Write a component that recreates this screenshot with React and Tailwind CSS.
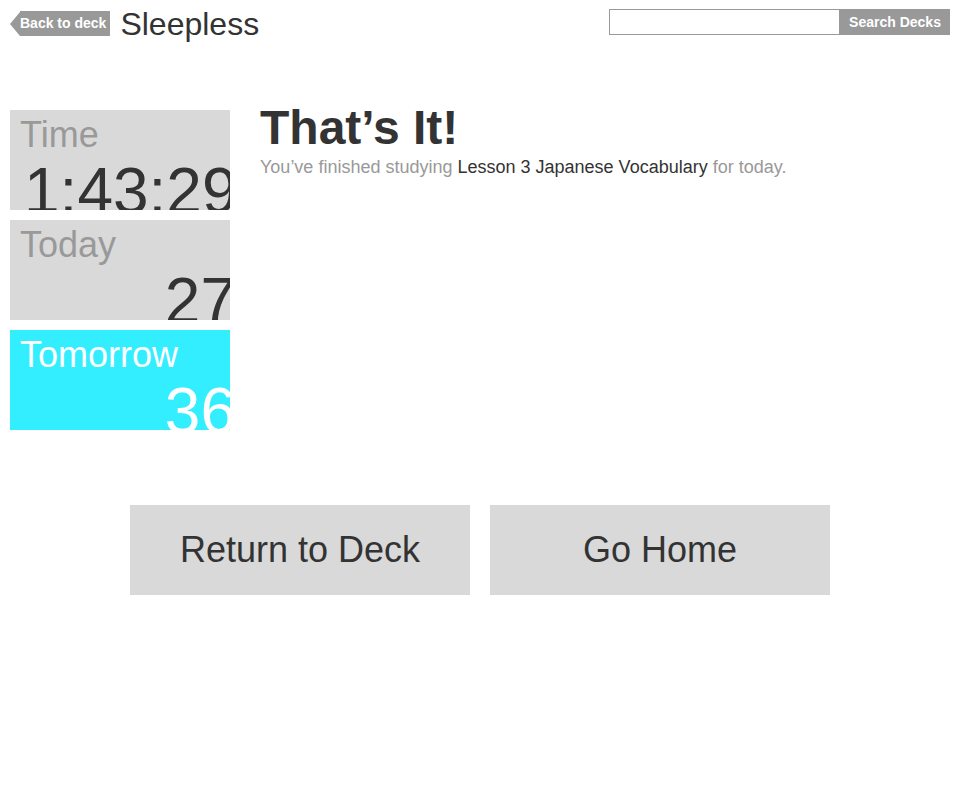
import React from 'react';

const stats = [
  { label: 'Time', value: '1:43:29', active: false },
  { label: 'Today', value: '27', active: false },
  { label: 'Tomorrow', value: '36', active: true },
];

function StatBox({ label, value, active }) {
  return (
    <div
      className={`h-[100px] w-[220px] overflow-hidden pl-[10px] pt-[5px] ${
        active ? 'bg-[#33eeff]' : 'bg-[#d9d9d9]'
      }`}
    >
      <div className={`text-[36px] leading-[40px] ${active ? 'text-white' : 'text-[#999999]'}`}>
        {label}
      </div>
      <div
        className={`-mr-[6px] mt-[4px] whitespace-nowrap pl-[4px] text-right text-[64px] leading-[64px] ${
          active ? 'text-white' : 'text-[#333333]'
        }`}
      >
        {value}
      </div>
    </div>
  );
}

export default function App() {
  return (
    <div className="min-h-[800px] w-[960px] bg-white font-['Liberation_Sans',Arial,sans-serif]">
      <header className="flex items-start justify-between px-[10px] pt-[9px]">
        <div className="flex items-center gap-[10px]">
          <button className="-mt-[1px] flex h-[25px] items-center">
            <span className="h-0 w-0 border-y-[12.5px] border-r-[10px] border-y-transparent border-r-[#999999]"></span>
            <span className="flex h-[25px] items-center bg-[#999999] pr-[4px] text-[14px] font-bold text-white">
              Back to deck
            </span>
          </button>
          <h1 className="text-[32px] leading-[30px] text-[#333333]">Sleepless</h1>
        </div>
        <div className="flex h-[26px]">
          <input
            type="text"
            className="h-[26px] w-[231px] border border-[#999999] bg-white px-1 text-[14px] outline-none"
          />
          <button className="h-[26px] w-[110px] bg-[#999999] text-[14px] font-bold text-white">
            Search Decks
          </button>
        </div>
      </header>

      <main className="mt-[61px] flex">
        <aside className="ml-[10px] mt-[10px] flex flex-col gap-[10px]">
          {stats.map((s) => (
            <StatBox key={s.label} {...s} />
          ))}
        </aside>
        <section className="ml-[30px]">
          <h2 className="text-[48px] font-bold leading-[56px] text-[#333333]">That’s It!</h2>
          <p className="text-[18px] leading-[23px] text-[#999999]">
            You’ve finished studying{' '}
            <span className="text-[#333333]">Lesson 3 Japanese Vocabulary</span> for today.
          </p>
        </section>
      </main>

      <div className="mt-[75px] flex justify-center gap-[20px]">
        <button className="h-[90px] w-[340px] bg-[#d9d9d9] text-[36px] text-[#333333]">
          Return to Deck
        </button>
        <button className="h-[90px] w-[340px] bg-[#d9d9d9] text-[36px] text-[#333333]">
          Go Home
        </button>
      </div>
    </div>
  );
}
